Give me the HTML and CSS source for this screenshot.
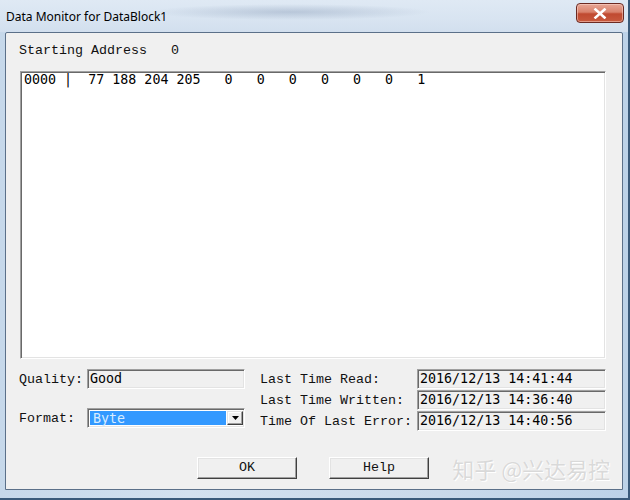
FILE: index.html
```html
<!DOCTYPE html>
<html lang="en">
<head>
  <meta charset="UTF-8">
  <title>Data Monitor for DataBlock1</title>
  <link rel="stylesheet" href="styles.css">
</head>
<body>

  <div class="window">
    <div class="titlebar">
      <span class="title">Data Monitor for DataBlock1</span>
      <div class="close-btn">
        <svg width="14" height="11" viewBox="0 0 14 11">
          <path d="M2.5 1.5 L11.5 9.5 M11.5 1.5 L2.5 9.5" stroke="#fff" stroke-width="2.6" stroke-linecap="square"/>
        </svg>
      </div>
    </div>

    <div class="client">
      <div class="start-row">Starting Address   0</div>

      <div class="databox">0000 |  77 188 204 205   0   0   0   0   0   0   1</div>

      <div class="lower">
        <div class="left-col">
          <div class="row">
            <span class="label label-left">Quality:</span>
            <div class="field field-left">Good</div>
          </div>
          <div class="row row-format">
            <span class="label label-left">Format:</span>
            <div class="combo">
              <div class="combo-value">Byte</div>
              <div class="combo-btn">
                <svg width="7" height="4" viewBox="0 0 7 4"><path d="M0 0 H7 L3.5 4 Z" fill="#000"/></svg>
              </div>
            </div>
          </div>
        </div>

        <div class="right-col">
          <div class="row">
            <span class="label label-right">Last Time Read:</span>
            <div class="field field-right">2016/12/13 14:41:44</div>
          </div>
          <div class="row">
            <span class="label label-right">Last Time Written:</span>
            <div class="field field-right">2016/12/13 14:36:40</div>
          </div>
          <div class="row">
            <span class="label label-right">Time Of Last Error:</span>
            <div class="field field-right">2016/12/13 14:40:56</div>
          </div>
        </div>
      </div>

      <div class="buttons">
        <div class="btn">OK</div>
        <div class="btn">Help</div>
      </div>

      <div class="watermark">知乎 @兴达易控</div>
    </div>
  </div>

</body>
</html>
```

FILE: styles.css
```css
* {
  margin: 0;
  padding: 0;
  box-sizing: border-box;
}

html, body {
  width: 630px;
  height: 500px;
  overflow: hidden;
}

body {
  background: #b8cfe6;
}

.window {
  width: 630px;
  height: 500px;
  display: flex;
  flex-direction: column;
  background: linear-gradient(90deg, #c6d8ea 0%, #d3e1ef 30%, #c9d9ea 70%, #bcd2e8 100%);
  border-right: 2px solid #3a5a7a;
  border-bottom: 2px solid #3a5a7a;
}

.titlebar {
  height: 32px;
  flex-shrink: 0;
  display: flex;
  justify-content: space-between;
  align-items: flex-start;
  padding: 0 4px 0 6px;
  background:
    radial-gradient(ellipse 140px 8px at 290px 12px, rgba(120, 140, 170, 0.35), rgba(120, 140, 170, 0) 100%),
    linear-gradient(180deg, #dfe9f4 0%, #d8e4f1 60%, #d2dfee 100%);
}

.title {
  margin-top: 9px;
  font-family: "Noto Sans", "DejaVu Sans", sans-serif;
  font-size: 12px;
  line-height: 16px;
  color: #000;
}

.close-btn {
  margin-top: 3px;
  width: 48px;
  height: 20px;
  border: 1px solid #6b2a22;
  border-radius: 4px;
  background: linear-gradient(180deg, #e8a796 0%, #d9826c 45%, #c04a30 55%, #c85a3e 100%);
  display: flex;
  align-items: center;
  justify-content: center;
  box-shadow: inset 0 0 0 1px rgba(255, 220, 210, 0.5);
}

.client {
  position: relative;
  margin: 0 5px 8px 5px;
  flex: 1;
  background: #f0f0f0;
  border: 1px solid #5b7089;
  border-radius: 2px 2px 0 0;
  padding-left: 13px;
  font-family: "Liberation Mono", "Courier New", monospace;
  font-size: 13.33px;
  color: #111;
}

.start-row {
  margin-top: 10px;
  height: 16px;
  line-height: 16px;
  white-space: pre;
}

.databox {
  margin-top: 12px;
  margin-left: 1px;
  width: 586px;
  height: 288px;
  background: #fff;
  border: 1px solid;
  border-color: #a0a0a0 #fff #fff #a0a0a0;
  box-shadow: inset 1px 1px 0 #696969, inset -1px -1px 0 #e3e3e3;
  padding: 0 3px;
  color: #000;
  font-family: "DejaVu Sans Mono", monospace;
  font-size: 13.33px;
  line-height: 16px;
  white-space: pre;
}

.lower {
  margin-top: 10px;
  display: flex;
}

.left-col {
  display: flex;
  flex-direction: column;
}

.right-col {
  margin-left: 15px;
  display: flex;
  flex-direction: column;
  gap: 1px;
}

.row {
  display: flex;
  align-items: center;
  height: 20px;
}

.row-format {
  margin-top: 19px;
}

.label {
  white-space: pre;
  line-height: 16px;
  padding-top: 1px;
}

.label-left {
  width: 68px;
}

.label-right {
  width: 157px;
}

.field {
  height: 20px;
  background: #f0f0f0;
  border: 1px solid;
  border-color: #a0a0a0 #fff #fff #a0a0a0;
  box-shadow: inset 1px 1px 0 #696969, inset -1px -1px 0 #e3e3e3;
  padding: 1px 2px 0;
  color: #000;
  font-family: "DejaVu Sans Mono", monospace;
  font-size: 13.33px;
  line-height: 16px;
  white-space: pre;
}

.field-left {
  width: 158px;
}

.field-right {
  width: 189px;
}

.combo {
  width: 158px;
  height: 20px;
  display: flex;
  background: #fff;
  border: 1px solid;
  border-color: #a0a0a0 #fff #fff #a0a0a0;
  box-shadow: inset 1px 1px 0 #696969, inset -1px -1px 0 #e3e3e3;
  padding: 2px 1px 2px 2px;
}

.combo-value {
  flex: 1;
  background: #3399ff;
  color: #d8ecff;
  padding-left: 3px;
  font-family: "DejaVu Sans Mono", monospace;
  font-size: 13.33px;
  line-height: 16px;
}

.combo-btn {
  width: 16px;
  margin-left: 1px;
  background: #f0f0f0;
  border: 1px solid;
  border-color: #e3e3e3 #404040 #404040 #e3e3e3;
  box-shadow: inset -1px -1px 0 #a0a0a0, inset 1px 1px 0 #fff;
  display: flex;
  align-items: center;
  justify-content: center;
}

.buttons {
  margin-top: 26px;
  margin-left: 178px;
  display: flex;
  gap: 32px;
}

.btn {
  width: 100px;
  height: 22px;
  background: #f0f0f0;
  border: 1px solid;
  border-color: #fff #404040 #404040 #fff;
  box-shadow: inset -1px -1px 0 #a0a0a0, inset 1px 1px 0 #e3e3e3;
  text-align: center;
  line-height: 19px;
}

.watermark {
  position: absolute;
  right: 12px;
  top: 421px;
  font-family: "Noto Sans CJK SC", sans-serif;
  font-size: 22px;
  line-height: 28px;
  color: #d9d9d9;
  text-shadow: 0 0 1px #fff, 1px 1px 0 #fff;
}
```
